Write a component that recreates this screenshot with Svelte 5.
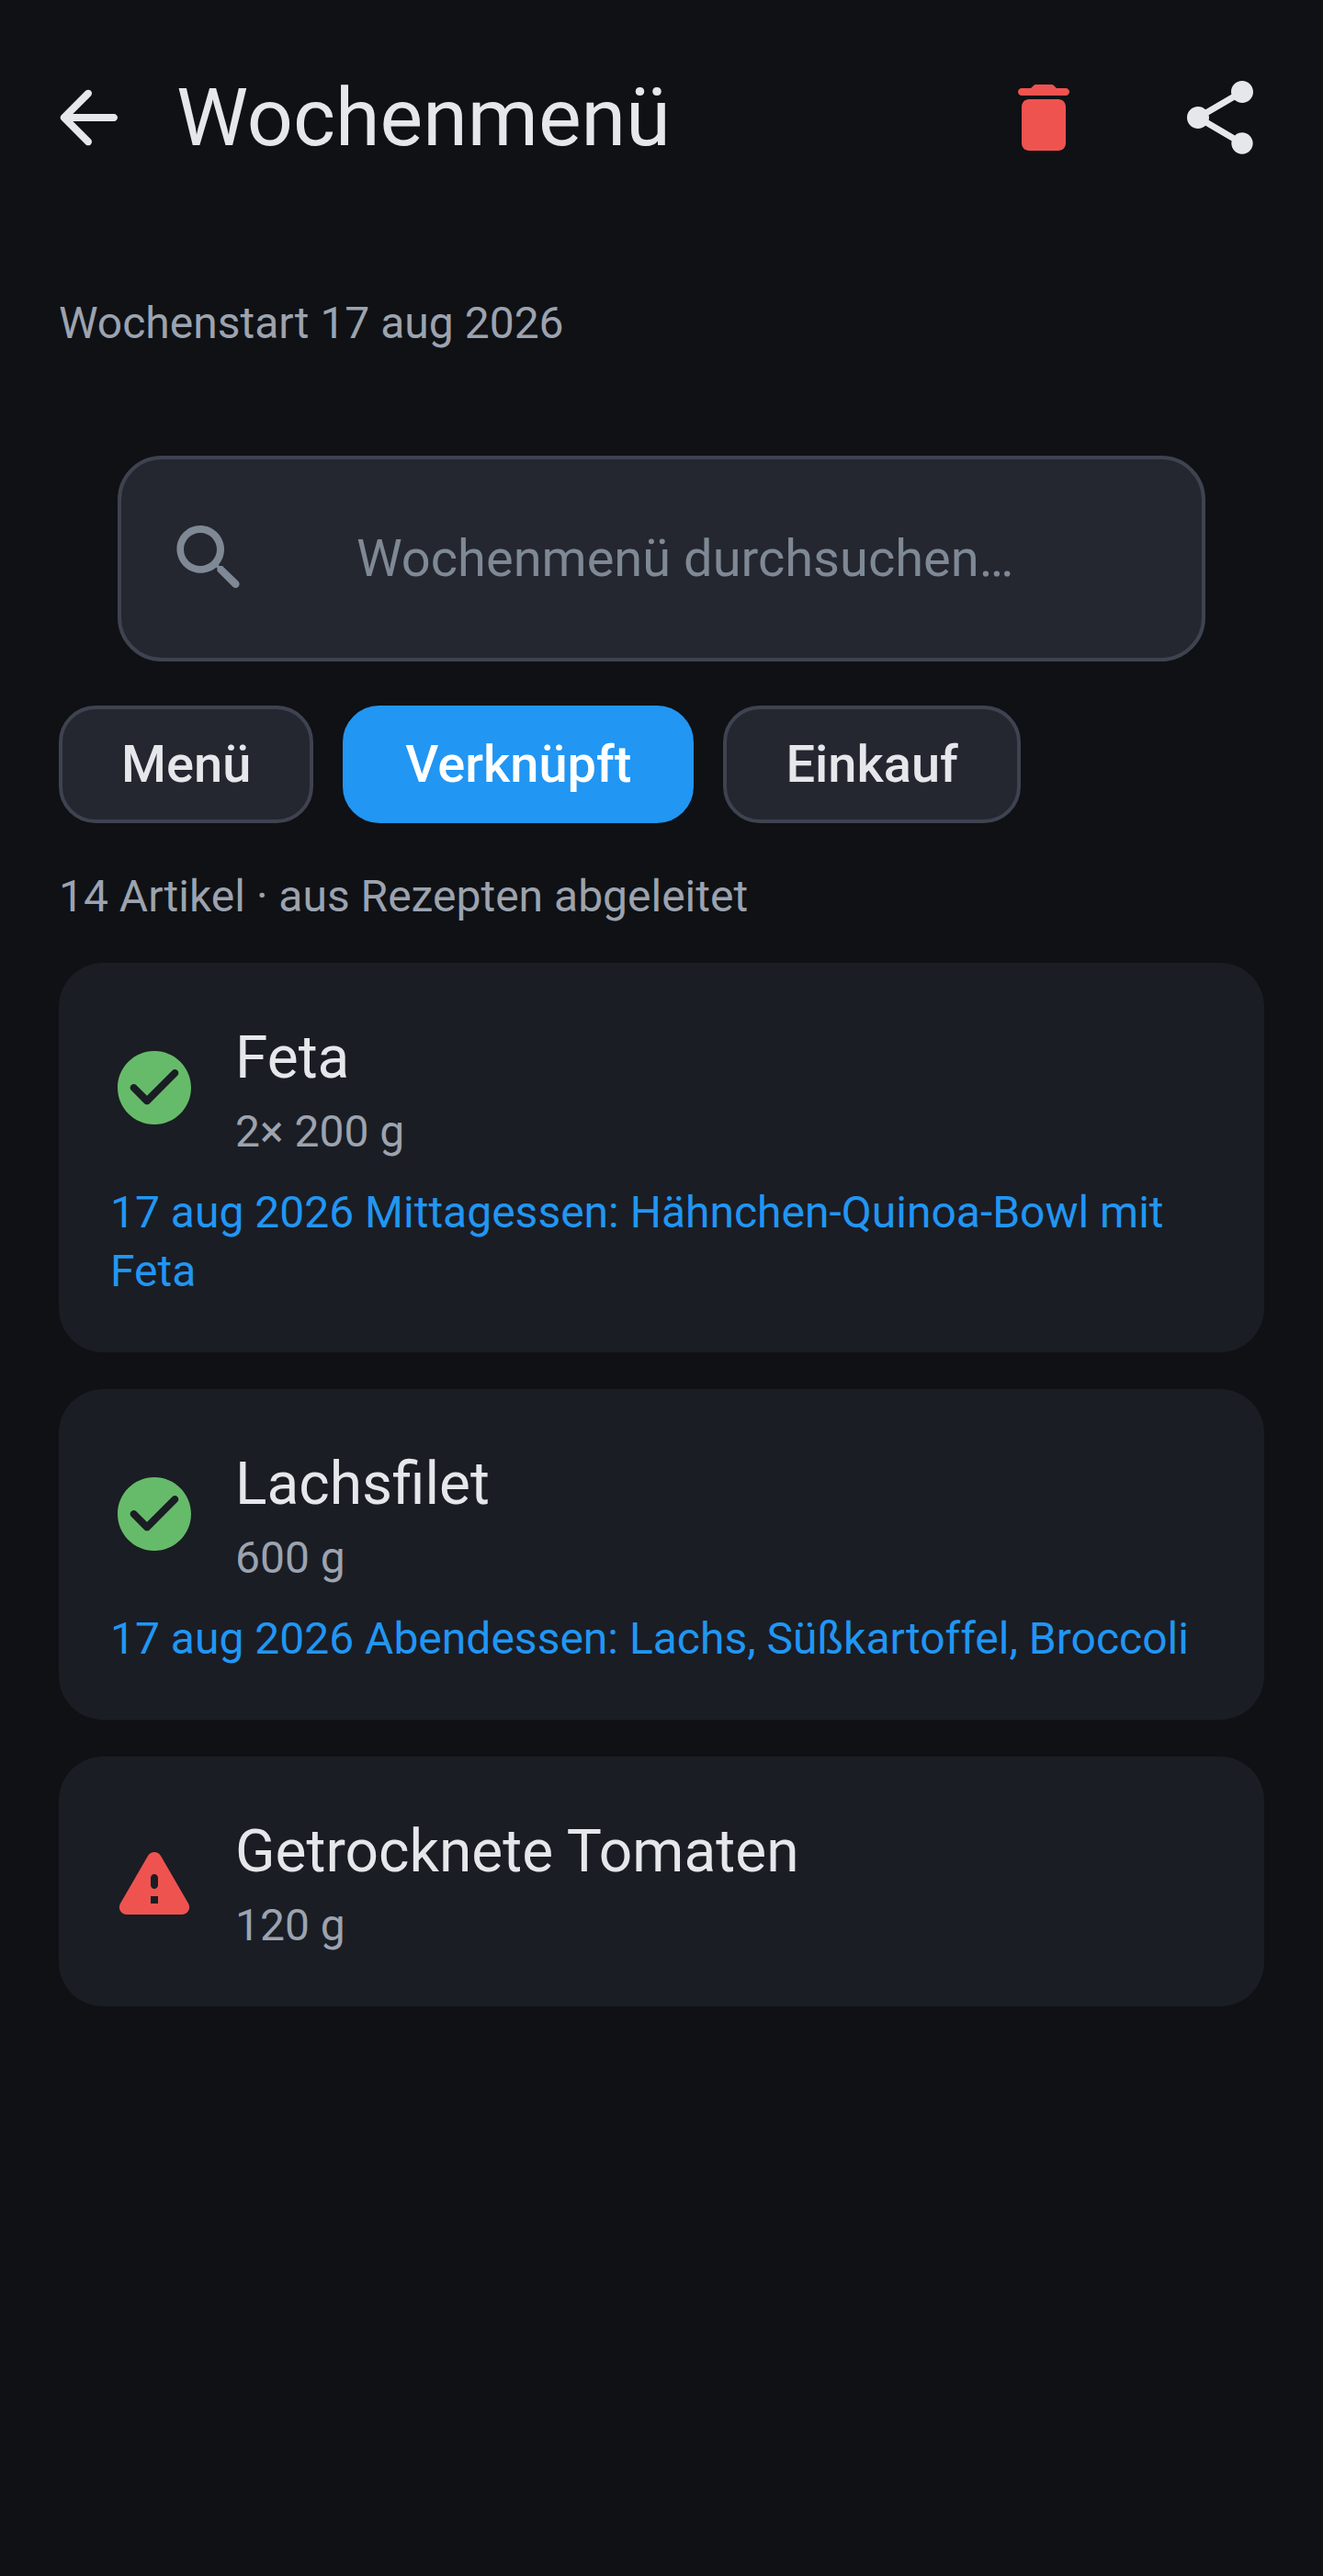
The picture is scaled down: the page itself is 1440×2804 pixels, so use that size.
<script lang="ts">
  type Item = { name: string; qty: string; status: 'ok' | 'missing'; link?: string };

  const tabs = ['Menü', 'Verknüpft', 'Einkauf'];
  const active = 'Verknüpft';

  const items: Item[] = [
    { name: 'Feta', qty: '2× 200 g', status: 'ok', link: '17 aug 2026 Mittagessen: Hähnchen-Quinoa-Bowl mit Feta' },
    { name: 'Lachsfilet', qty: '600 g', status: 'ok', link: '17 aug 2026 Abendessen: Lachs, Süßkartoffel, Broccoli' },
    { name: 'Getrocknete Tomaten', qty: '120 g', status: 'missing' },
  ];
</script>

<div class="page">
  <header class="topbar">
    <button class="icon-btn" aria-label="Zurück">
      <svg viewBox="0 0 24 24" class="ico light"><path d="M19 11H7.83l4.88-4.88c.39-.39.39-1.03 0-1.42-.39-.39-1.02-.39-1.41 0l-6.59 6.59c-.39.39-.39 1.02 0 1.41l6.59 6.59c.39.39 1.02.39 1.41 0 .39-.39.39-1.02 0-1.41L7.83 13H19c.55 0 1-.45 1-1s-.45-1-1-1z"/></svg>
    </button>
    <h1>Wochenmenü</h1>
    <button class="icon-btn" aria-label="Löschen">
      <svg viewBox="0 0 24 24" class="ico red"><path d="M6 19c0 1.1.9 2 2 2h8c1.1 0 2-.9 2-2V9c0-1.1-.9-2-2-2H8c-1.1 0-2 .9-2 2v10zM18 4h-2.5l-.71-.71c-.18-.18-.44-.29-.7-.29H9.91c-.26 0-.52.11-.7.29L8.5 4H6c-.55 0-1 .45-1 1s.45 1 1 1h12c.55 0 1-.45 1-1s-.45-1-1-1z"/></svg>
    </button>
    <button class="icon-btn" aria-label="Teilen">
      <svg viewBox="0 0 24 24" class="ico light"><path d="M18 16.08c-.76 0-1.44.3-1.96.77L8.91 12.7c.05-.23.09-.46.09-.7s-.04-.47-.09-.7l7.05-4.11c.54.5 1.25.81 2.04.81 1.66 0 3-1.34 3-3s-1.34-3-3-3-3 1.34-3 3c0 .24.04.47.09.7L8.04 9.81C7.5 9.31 6.79 9 6 9c-1.66 0-3 1.34-3 3s1.34 3 3 3c.79 0 1.5-.31 2.04-.81l7.12 4.16c-.05.21-.08.43-.08.65 0 1.61 1.31 2.92 2.92 2.92s2.92-1.31 2.92-2.92-1.31-2.92-2.92-2.92z"/></svg>
    </button>
  </header>

  <main class="body">
    <p class="week">Wochenstart 17 aug 2026</p>

    <div class="search">
      <svg viewBox="0 0 24 24" class="ico grey"><path d="M15.5 14h-.79l-.28-.27c1.2-1.4 1.82-3.31 1.48-5.34-.47-2.78-2.79-5-5.59-5.34-4.2-.52-7.67 3.01-7.16 7.21.34 2.8 2.56 5.12 5.34 5.59 2.03.34 3.94-.28 5.34-1.48l.27.28v.79l4.26 4.25c.41.41 1.07.41 1.48 0 .41-.41.41-1.07 0-1.48L15.5 14zm-6 0C7.01 14 5 11.99 5 9.5S7.01 5 9.5 5 14 7.01 14 9.5 11.99 14 9.5 14z"/></svg>
      <span class="placeholder">Wochenmenü durchsuchen…</span>
    </div>

    <div class="tabs">
      {#each tabs as tab}
        <button class="tab" class:active={tab === active}>{tab}</button>
      {/each}
    </div>

    <p class="count">14 Artikel · aus Rezepten abgeleitet</p>

    <div class="list">
      {#each items as item}
        <article class="card">
          <div class="row">
            {#if item.status === 'ok'}
              <svg viewBox="0 0 24 24" class="ico green"><path d="M12 2C6.48 2 2 6.48 2 12s4.48 10 10 10 10-4.48 10-10S17.52 2 12 2zM9.29 16.29 5.7 12.7c-.39-.39-.39-1.02 0-1.41.39-.39 1.02-.39 1.41 0L10 14.17l6.88-6.88c.39-.39 1.02-.39 1.41 0 .39.39.39 1.02 0 1.41l-7.59 7.59c-.38.39-1.02.39-1.41 0z"/></svg>
            {:else}
              <svg viewBox="0 0 24 24" class="ico red"><path d="M4.47 21h15.06c1.54 0 2.5-1.67 1.73-3L13.73 4.99c-.77-1.33-2.69-1.33-3.46 0L2.74 18c-.77 1.33.19 3 1.73 3zM12 14c-.55 0-1-.45-1-1v-2c0-.55.45-1 1-1s1 .45 1 1v2c0 .55-.45 1-1 1zm1 4h-2v-2h2v2z"/></svg>
            {/if}
            <div class="info">
              <div class="name">{item.name}</div>
              <div class="qty">{item.qty}</div>
            </div>
          </div>
          {#if item.link}
            <div class="link">{item.link}</div>
          {/if}
        </article>
      {/each}
    </div>
  </main>
</div>

<style>
  :global(body) {
    background-color: #0f1115;
  }
  .page {
    min-height: 2804px;
    background-color: #0f1115;
    font-family: Roboto, "Liberation Sans", sans-serif;
    color: #e5e7eb;
  }
  .topbar {
    display: flex;
    align-items: center;
    padding: 32px 16px 0 0;
  }
  .topbar h1 {
    flex: 1;
    margin: 0;
    font-size: 88px;
    font-weight: 400;
    line-height: 128px;
  }
  .icon-btn {
    width: 192px;
    height: 192px;
    padding: 48px;
    border: none;
    background: none;
    flex-shrink: 0;
  }
  .ico {
    display: block;
    width: 96px;
    height: 96px;
    flex-shrink: 0;
  }
  .light { fill: #e5e7eb; }
  .red { fill: #ef5350; }
  .grey { fill: #7f8995; }
  .green { fill: #66bb6a; }
  .body {
    padding: 96px 64px 0;
  }
  .week {
    margin: 0 0 112px;
    font-size: 48px;
    line-height: 64px;
    color: #9ca3af;
  }
  .search {
    display: flex;
    align-items: center;
    gap: 112px;
    box-sizing: border-box;
    height: 224px;
    margin: 0 64px 48px;
    padding: 0 48px;
    background-color: #242730;
    border: 4px solid #3f4350;
    border-radius: 48px;
  }
  .placeholder {
    font-size: 56px;
    color: #7f8995;
  }
  .tabs {
    display: flex;
    gap: 32px;
  }
  .tab {
    height: 128px;
    padding: 0 64px;
    font-family: inherit;
    font-size: 56px;
    font-weight: 500;
    color: #e5e7eb;
    background-color: #242730;
    border: 4px solid #3f4350;
    border-radius: 40px;
  }
  .tab.active {
    color: #fff;
    background-color: #2196f3;
    border-color: #2196f3;
  }
  .count {
    margin: 48px 0 40px;
    font-size: 48px;
    line-height: 64px;
    color: #9ca3af;
  }
  .list {
    display: flex;
    flex-direction: column;
    gap: 40px;
  }
  .card {
    padding: 56px;
    background-color: #1a1d24;
    border-radius: 48px;
  }
  .row {
    display: flex;
    align-items: center;
    gap: 40px;
  }
  .name {
    font-size: 64px;
    line-height: 96px;
  }
  .qty {
    font-size: 48px;
    line-height: 64px;
    color: #9ca3af;
  }
  .link {
    margin-top: 24px;
    font-size: 48px;
    line-height: 64px;
    color: #2196f3;
  }
</style>
